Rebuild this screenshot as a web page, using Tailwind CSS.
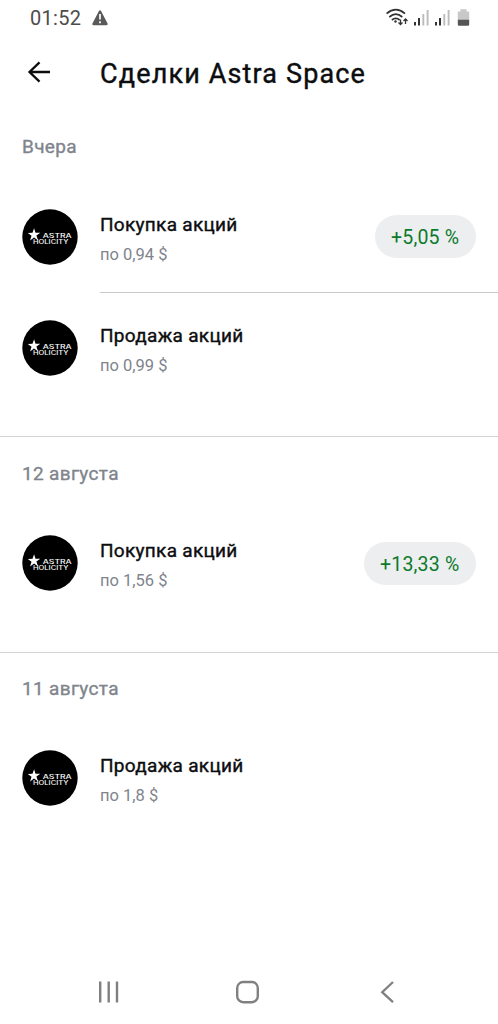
<!DOCTYPE html>
<html lang="ru">
<head>
<meta charset="utf-8">
<title>Сделки Astra Space</title>
<script src="https://cdn.jsdelivr.net/npm/@tailwindcss/browser@4"></script>
</head>
<body class="bg-white">
<svg class="hidden">
  <symbol id="logo" viewBox="0 0 56 56">
    <circle cx="28" cy="28" r="27.7" fill="#000"/>
    <path d="M12.1 19.2l1.4 4.6 4.8-.1-3.9 2.9 1.6 4.7-4-2.8-3.9 3 1.4-4.8-3.7-2.7 4.7-.2z" fill="#fff"/>
    <text transform="translate(20.8 28.7) scale(1.3 1)" textLength="22.2" lengthAdjust="spacingAndGlyphs" font-family="Inter, sans-serif" font-weight="500" font-size="6" fill="#fff">ASTRA</text>
    <text transform="translate(11 35.2) scale(1.3 1)" textLength="27.3" lengthAdjust="spacingAndGlyphs" font-family="Inter, sans-serif" font-weight="500" font-size="5.7" fill="#fff">HOLICITY</text>
  </symbol>
</svg>
<div class="flex h-[1024px] w-[498px] flex-col overflow-hidden bg-white font-['Roboto',sans-serif] text-[#0c0d0f]">
  <div class="flex h-9 shrink-0 items-center pl-[30px] text-[20px] leading-9 text-[#4c4c4c]">
    <span class="w-[52px] whitespace-nowrap tracking-[0.3px]">01:52</span>
    <svg class="ml-[9px]" width="18" height="18" viewBox="0 0 18 18"><path d="M9 2.5L15.5 15h-13z" fill="#5a5a5a" stroke="#5a5a5a" stroke-width="2.4" stroke-linejoin="round"/><path d="M9 5v5.6M9 12.3v1.9" stroke="#fff" stroke-width="1.7"/></svg>
    <svg class="ml-auto mr-7" width="84" height="24" viewBox="386 6 84 24">
      <g fill="none" stroke="#333" stroke-width="1.7"><path d="M386.6 13.6q9.2-7.8 18.4 0M389.3 17q6.5-5.7 13 0M391.9 20q3.9-3.4 7.8 0"/></g>
      <circle cx="395.5" cy="21.5" r="1.2" fill="#333"/>
      <path d="M400.5 19.5v5M398.5 22.5l2 2 2-2M405.5 24v-5M403.5 21l2-2 2 2" fill="none" stroke="#333" stroke-width="1.3"/>
      <path d="M415 22v3.5M419 18v7.5M436 22v3.5M440 18v7.5" stroke="#333" stroke-width="2"/>
      <path d="M423.3 14v11.5M427.6 10v15.5M444.3 14v11.5M448.6 10v15.5" stroke="#bcbcbc" stroke-width="1.9"/>
      <path d="M460.5 9.3h6v2.2h2.7v8.5h-11.4v-8.5h2.7z" fill="#c8c8c8"/><path d="M457.8 19.8h11.4v4.7q0 1.3-1.3 1.3h-8.8q-1.3 0-1.3-1.3z" fill="#555"/>
    </svg>
  </div>
  <header class="flex h-[74px] shrink-0 items-center pl-[27px]">
    <svg class="-mt-0.5" width="24" height="24" viewBox="0 0 24 24" fill="none" stroke="#0c0d0f" stroke-width="2.3"><path d="M23 12H2.5M12.5 2.3L2.5 12l10 9.7"/></svg>
    <h1 class="ml-[49px] mt-0.5 whitespace-nowrap text-[27px] font-normal tracking-[1.15px] [-webkit-text-stroke:0.4px]">Сделки Astra Space</h1>
  </header>
  <main class="flex flex-col">
    <section class="h-[326px]">
      <h2 class="h-[71px] pl-[22px] text-[19px] font-normal leading-[74px] tracking-[0.35px] text-[#80848c] [-webkit-text-stroke:0.35px]">Вчера</h2>
      <div class="flex h-[111px] items-center pl-[22px] pr-[22px]">
        <svg width="56" height="56"><use href="#logo"/></svg>
        <div class="ml-[22px] pt-[6px]"><div class="text-[19px] leading-[30px] tracking-[0.3px] [-webkit-text-stroke:0.4px]">Покупка акций</div><div class="text-[16.5px] leading-[30px] text-[#80848c]">по 0,94 $</div></div>
        <div class="ml-auto h-[43px] w-[101px] rounded-full bg-[#eceef0] pl-4 text-[19.5px] leading-[46px] tracking-[0.2px] whitespace-nowrap text-[#0c7a2c]">+5,05 %</div>
      </div>
      <div class="ml-[100px] h-px bg-[#c8c9cc]"></div>
      <div class="-mt-px flex h-[111px] items-center pl-[22px] pr-[22px]">
        <svg width="56" height="56"><use href="#logo"/></svg>
        <div class="ml-[22px] pt-[6px]"><div class="text-[19px] leading-[30px] tracking-[0.3px] [-webkit-text-stroke:0.4px]">Продажа акций</div><div class="text-[16.5px] leading-[30px] text-[#80848c]">по 0,99 $</div></div>
      </div>
    </section>
    <section class="h-[216px] border-t-[1.5px] border-[#d2d3d5]">
      <h2 class="h-[70px] pl-[22px] text-[19px] font-normal leading-[74px] tracking-[0.35px] text-[#80848c] [-webkit-text-stroke:0.35px]">12 августа</h2>
      <div class="flex h-[111px] items-center pl-[22px] pr-[22px]">
        <svg width="56" height="56"><use href="#logo"/></svg>
        <div class="ml-[22px] pt-[6px]"><div class="text-[19px] leading-[30px] tracking-[0.3px] [-webkit-text-stroke:0.4px]">Покупка акций</div><div class="text-[16.5px] leading-[30px] text-[#80848c]">по 1,56 $</div></div>
        <div class="mt-px ml-auto h-[43px] w-[112px] rounded-full bg-[#eceef0] pl-4 text-[19.5px] leading-[45px] tracking-[0.2px] whitespace-nowrap text-[#0c7a2c]">+13,33 %</div>
      </div>
    </section>
    <section class="border-t-[1.5px] border-[#d2d3d5]">
      <h2 class="h-[69px] pl-[22px] text-[19px] font-normal leading-[72px] tracking-[0.35px] text-[#80848c] [-webkit-text-stroke:0.35px]">11 августа</h2>
      <div class="flex h-[111px] items-center pl-[22px] pr-[22px]">
        <svg width="56" height="56"><use href="#logo"/></svg>
        <div class="ml-[22px] pt-[6px]"><div class="text-[19px] leading-[30px] tracking-[0.3px] [-webkit-text-stroke:0.4px]">Продажа акций</div><div class="text-[16.5px] leading-[30px] text-[#80848c]">по 1,8 $</div></div>
      </div>
    </section>
  </main>
  <nav class="mt-auto flex h-16 shrink-0 items-center pl-[97px]">
    <svg width="24" height="24" viewBox="0 0 24 24" stroke="#808080" stroke-width="2.4"><path d="M3.2 1.5v21M11.7 1.5v21M20 1.5v21"/></svg>
    <svg class="ml-[114px]" width="24" height="24" viewBox="0 0 24 24" fill="none" stroke="#808080" stroke-width="2.4"><rect x="2.2" y="2" width="20.6" height="20.2" rx="6"/></svg>
    <svg class="ml-[121px]" width="15" height="24" viewBox="0 0 15 24" fill="none" stroke="#808080" stroke-width="2.3"><path d="M13 2L2.2 12.2l10.8 10"/></svg>
  </nav>
</div>
</body>
</html>
